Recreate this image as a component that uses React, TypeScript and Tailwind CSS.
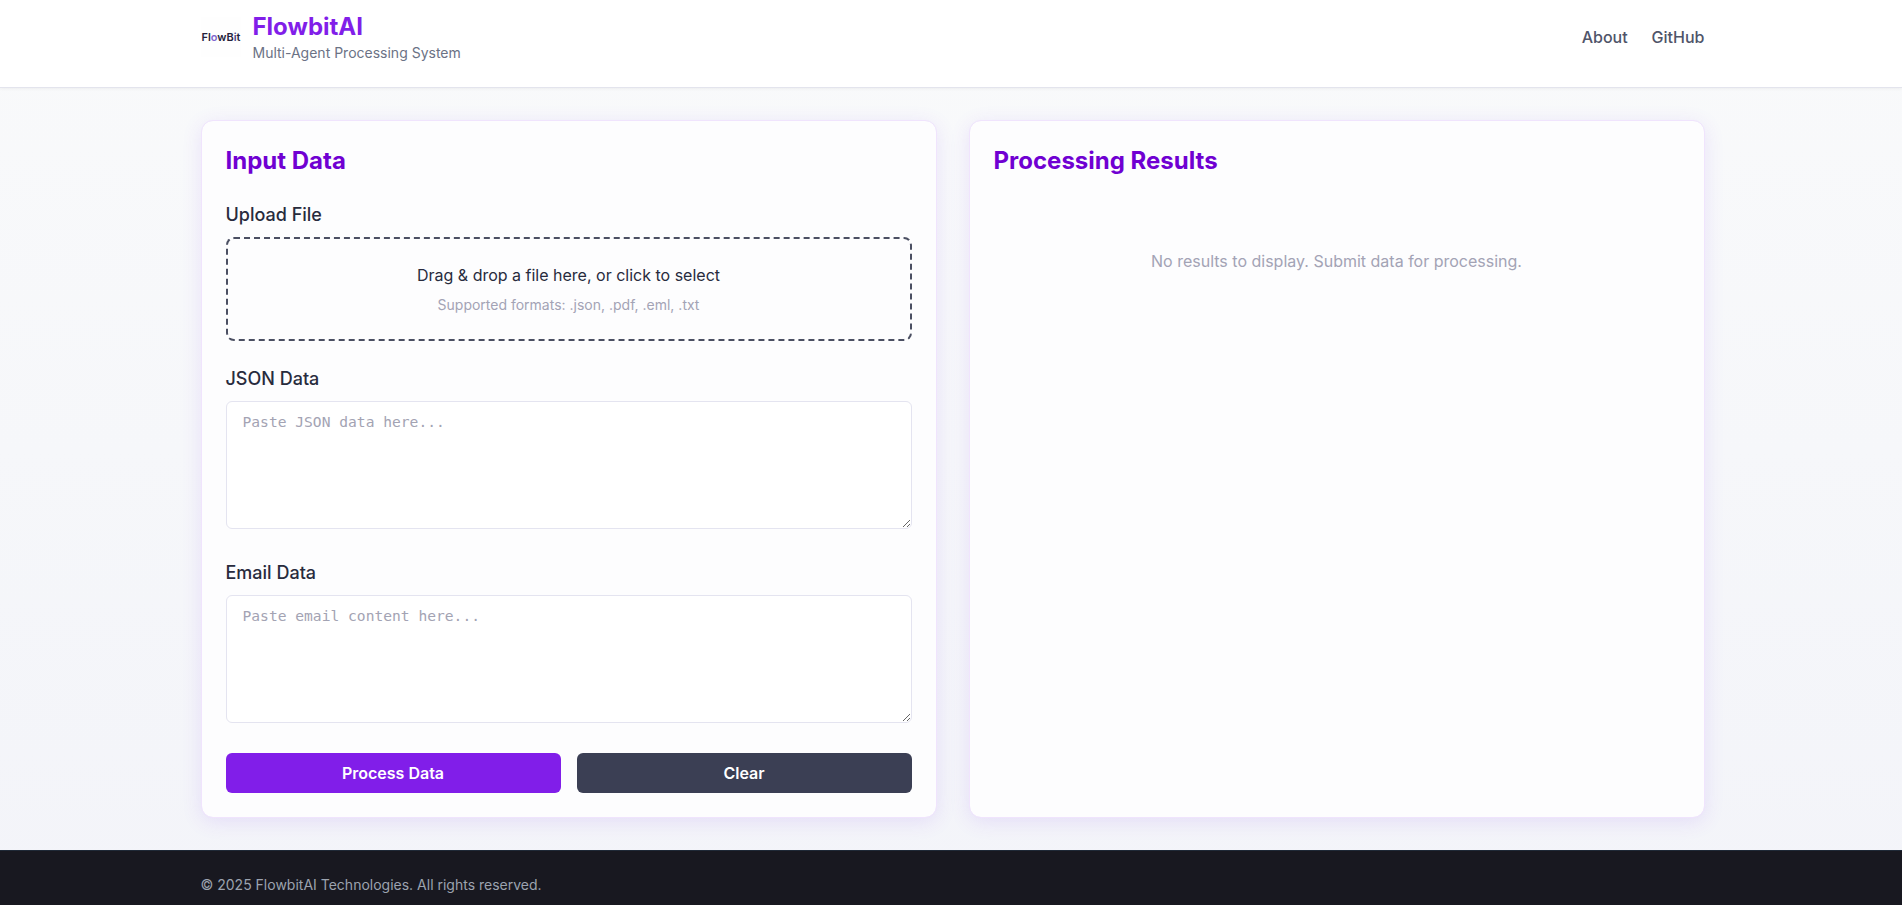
import type { ReactNode } from "react";

function Container({ className = "", children }: { className?: string; children: ReactNode }) {
  return <div className={`ml-[184.5px] w-[1536px] px-4 ${className}`}>{children}</div>;
}

function Logo() {
  return (
    <svg width="40" height="40" viewBox="0 0 40 40" aria-label="FlowBit">
      <rect width="40" height="40" fill="#fefefe" />
      <text x="0.5" y="24" textLength="39" lengthAdjust="spacingAndGlyphs" fontSize="11" fontWeight="600" fill="#25223a" fontFamily="Inter, sans-serif">
        Fl<tspan fill="#8068cf">o</tspan>wB<tspan fill="#4a3d86">i</tspan>t
      </text>
    </svg>
  );
}

function Card({ title, children }: { title: string; children: ReactNode }) {
  return (
    <section className="flex-1 rounded-xl border border-[#f0e4fd] bg-[#fdfdfe] bg-clip-padding p-6 shadow-[0_4px_20px_rgba(124,58,237,0.12)]">
      <h2 className="mb-6 text-2xl font-bold text-[#7000d2]">{title}</h2>
      {children}
    </section>
  );
}

function Field({ label, placeholder }: { label: string; placeholder: string }) {
  return (
    <div className="mb-[30px]">
      <label className="mb-2 block text-lg font-medium text-[#282b3d]">{label}</label>
      <textarea
        placeholder={placeholder}
        className="block h-32 w-full resize-y rounded-md border border-[#e4e4f0] bg-white px-4 py-2 font-['DejaVu_Sans_Mono',monospace] text-[14.62px] leading-6 placeholder:text-[#a3a3b3]"
      />
    </div>
  );
}

export default function App() {
  return (
    <div className="h-[905px] overflow-hidden bg-linear-to-b from-[#f9fafb] to-[#f3f4f9] font-[Inter,sans-serif]">
      <header className="border-b border-[#e3e4ed] bg-white pt-[11px] pb-6 shadow-[0_1px_3px_rgba(0,0,0,0.05)]">
        <Container className="flex items-center justify-between">
          <div className="flex items-center gap-3">
            <Logo />
            <div>
              <h1 className="text-2xl font-bold text-[#811ee9]">FlowbitAI</h1>
              <p className="text-sm text-[#6b7285]">Multi-Agent Processing System</p>
            </div>
          </div>
          <nav className="flex gap-6 font-medium text-[#4f5469]">
            <a href="#about">About</a>
            <a href="#github">GitHub</a>
          </nav>
        </Container>
      </header>

      <main className="py-8">
        <Container className="flex gap-8">
          <Card title="Input Data">
            <div className="mb-6">
              <label className="mb-2 block text-lg font-medium text-[#282b3d]">Upload File</label>
              <div className="rounded-lg border-2 border-dashed border-[#4b4f62] p-6 text-center">
                <p className="text-[#282b3d]">Drag &amp; drop a file here, or click to select</p>
                <p className="mt-2 text-sm text-[#a3a3b5]">Supported formats: .json, .pdf, .eml, .txt</p>
              </div>
            </div>
            <Field label="JSON Data" placeholder="Paste JSON data here..." />
            <Field label="Email Data" placeholder="Paste email content here..." />
            <div className="flex gap-4">
              <button className="h-10 flex-1 rounded-md bg-[#811ee9] font-semibold text-white">Process Data</button>
              <button className="h-10 flex-1 rounded-md bg-[#3b3f54] font-semibold text-white">Clear</button>
            </div>
          </Card>
          <Card title="Processing Results">
            <p className="py-12 text-center text-[#a3a3b5]">No results to display. Submit data for processing.</p>
          </Card>
        </Container>
      </main>

      <footer className="border-t border-[#1f2937] bg-[#181820] py-6">
        <Container>
          <p className="text-sm text-[#9ca3af]">© 2025 FlowbitAI Technologies. All rights reserved.</p>
        </Container>
      </footer>
    </div>
  );
}
